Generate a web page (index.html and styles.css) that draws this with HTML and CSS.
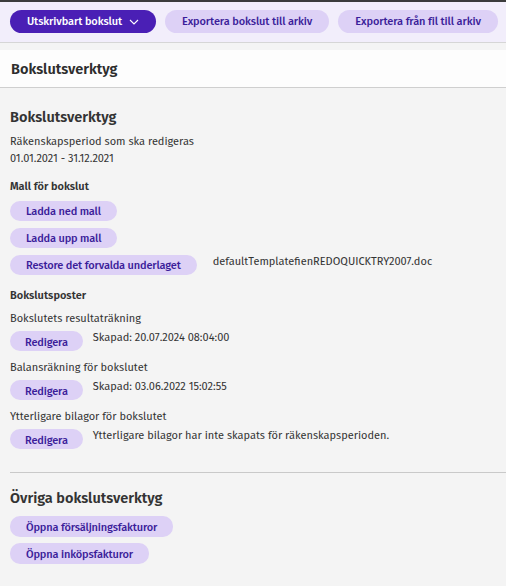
FILE: index.html
```html
<!DOCTYPE html>
<html lang="sv">
<head>
<meta charset="utf-8">
<title>Bokslutsverktyg</title>
<link rel="stylesheet" href="styles.css">
</head>
<body>
<div class="toolbar">
  <button class="btn btn-primary">Utskrivbart bokslut
    <svg class="chev" width="10" height="6" viewBox="0 0 10 6"><path d="M1 1l4 4 4-4" fill="none" stroke="#fff" stroke-width="1.1"/></svg>
  </button>
  <button class="btn btn-light">Exportera bokslut till arkiv</button>
  <button class="btn btn-light">Exportera från fil till arkiv</button>
</div>
<div class="page-header">Bokslutsverktyg</div>
<main class="content">
  <h2 class="section-title">Bokslutsverktyg</h2>
  <p class="line">Räkenskapsperiod som ska redigeras</p>
  <p class="line">01.01.2021 - 31.12.2021</p>

  <h3 class="sub-title">Mall för bokslut</h3>
  <div class="btn-stack">
    <div class="row"><button class="btn btn-small">Ladda ned mall</button></div>
    <div class="row"><button class="btn btn-small">Ladda upp mall</button></div>
    <div class="row"><button class="btn btn-small">Restore det forvalda underlaget</button><span class="file">defaultTemplatefienREDOQUICKTRY2007.doc</span></div>
  </div>

  <h3 class="sub-title posts">Bokslutsposter</h3>
  <p class="line">Bokslutets resultaträkning</p>
  <div class="row entry"><button class="btn btn-small btn-edit">Redigera</button><span class="note">Skapad: 20.07.2024 08:04:00</span></div>
  <p class="line">Balansräkning för bokslutet</p>
  <div class="row entry"><button class="btn btn-small btn-edit">Redigera</button><span class="note">Skapad: 03.06.2022 15:02:55</span></div>
  <p class="line">Ytterligare bilagor för bokslutet</p>
  <div class="row entry"><button class="btn btn-small btn-edit">Redigera</button><span class="note">Ytterligare bilagor har inte skapats för räkenskapsperioden.</span></div>

  <hr class="divider">

  <h2 class="section-title other">Övriga bokslutsverktyg</h2>
  <div class="btn-stack tight">
    <div class="row"><button class="btn btn-small btn-normal">Öppna försäljningsfakturor</button></div>
    <div class="row"><button class="btn btn-small btn-normal">Öppna inköpsfakturor</button></div>
  </div>
</main>
</body>
</html>
```

FILE: styles.css
```css
* { box-sizing: border-box; }
html, body { margin: 0; padding: 0; }
body {
  background: #f4f4f4;
  font-family: "Fira Sans", Lato, "Noto Sans", sans-serif;
  font-size: 11px;
  color: #333;
  border-top: 2px solid #3c3c3c;
}
.toolbar {
  display: flex;
  gap: 9px;
  padding: 8px 10px 9px;
  background: #f2eefb;
  border-bottom: 1px solid #d6d6d6;
}
.btn {
  font-family: inherit;
  border: 0;
  margin: 0;
  display: inline-flex;
  align-items: center;
  justify-content: center;
  white-space: nowrap;
  cursor: pointer;
}
.toolbar .btn {
  height: 23px;
  border-radius: 12px;
  padding: 0 17px;
  font-size: 11px;
  letter-spacing: -0.1px;
  font-weight: 500;
}
.btn-primary {
  background: #4a1fb5;
  color: #fff;
  gap: 7px;
}
.btn-light {
  background: #ddd1f6;
  color: #3b1d9a;
}
.page-header {
  margin-top: 7px;
  background: #fdfdfd;
  height: 38px;
  padding: 0 11px;
  display: flex;
  align-items: center;
  font-size: 14.5px;
  font-weight: 600;
  color: #2d2d2d;
  border-bottom: 1px solid #cfcfcf;
}
.content {
  padding: 20px 0 0 10px;
}
.section-title {
  margin: 0 0 6px;
  font-size: 14.5px;
  line-height: 19px;
  font-weight: 600;
  color: #333;
}
.line {
  margin: 0;
  line-height: 17px;
}
.sub-title {
  margin: 11px 0 6px;
  font-size: 11px;
  font-weight: 600;
  line-height: 17px;
}
.sub-title.posts { margin-top: 12px; margin-bottom: 6px; }
.btn-stack {
  display: flex;
  flex-direction: column;
  gap: 7px;
}
.btn-stack.tight { gap: 6px; }
.row {
  display: flex;
  align-items: flex-start;
}
.btn-small {
  height: 20px;
  border-radius: 10px;
  padding: 1px 16px 0;
  background: #ddd1f6;
  color: #3b1d9a;
  font-size: 11px;
  letter-spacing: -0.15px;
  font-weight: 500;
}
.btn-edit { padding: 3px 15px 0; }
.file {
  margin-left: 16px;
  line-height: 14px;
}
.entry {
  margin: 4px 0 8px;
}
.note {
  margin-left: 10px;
  line-height: 14px;
}
.divider {
  border: 0;
  border-top: 1px solid #c9c9c9;
  margin: 23px 0 16px;
}
.section-title.other { margin-bottom: 8px; }
.btn-normal { height: 21px; }
```
